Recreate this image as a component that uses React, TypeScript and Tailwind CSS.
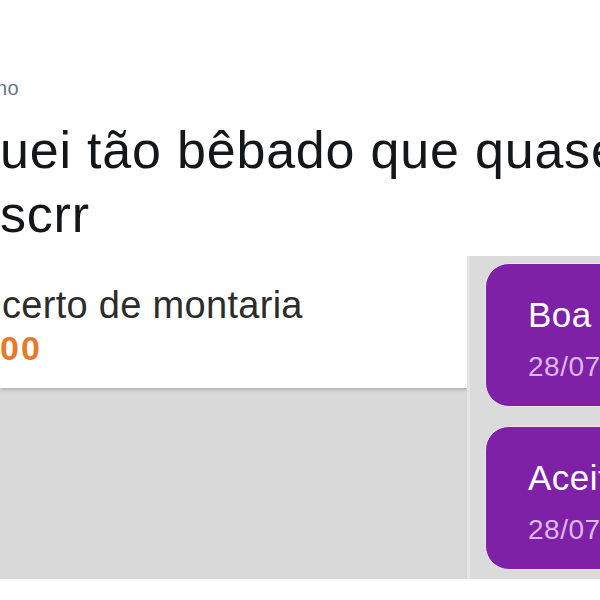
export default function App() {
  const bubbles = [
    { text: 'Boa', date: '28/07' },
    { text: 'Aceito', date: '28/07' },
  ]

  return (
    <div className="w-[600px] h-[600px] bg-white overflow-hidden font-['Liberation_Sans',Arial,sans-serif]">
      {/* Tweet */}
      <div className="h-[256px] pt-[78px] overflow-hidden whitespace-nowrap">
        <p className="-ml-[4px] text-[20px] leading-none tracking-[0.5px] text-[#657786]">no</p>
        <p className="mt-[20px] text-[52px] leading-[64px] tracking-[0.8px] text-[#14171a]">
          uei tão bêbado que quase
          <br />
          scrr
        </p>
      </div>

      {/* Screenshot inside tweet */}
      <div className="flex h-[323px] overflow-hidden">
        <div className="w-[467px] shrink-0 bg-[#d9d9d9]">
          <div className="h-[132px] bg-white pt-[27px] pl-[2px] shadow-[0_2px_3px_rgba(0,0,0,0.18)] whitespace-nowrap">
            <p className="text-[38px] leading-[44px] tracking-[0.3px] text-[#2c2c2c]">certo de montaria</p>
            <p className="mt-[3px] -ml-[2px] text-[34px] leading-[37px] font-bold tracking-[2px] text-[#e8792b]">00</p>
          </div>
        </div>
        <div className="w-[3px] shrink-0 bg-[#e5e5e5]" />
        <div className="flex-1 bg-[#dbdbdb] pl-[15px] pt-[7px] flex flex-col gap-[19px]">
          {bubbles.map((b) => (
            <div
              key={b.text}
              className="w-[160px] h-[144px] shrink-0 rounded-[24px] bg-[#7e21a7] border border-[#eedff4] pt-[31px] pl-[42px] whitespace-nowrap"
            >
              <p className="text-[35px] leading-[40px] tracking-[0.5px] text-white">{b.text}</p>
              <p className="mt-[15px] text-[28px] leading-[33px] tracking-[0.5px] text-[#d9b8ea]">{b.date}</p>
            </div>
          ))}
        </div>
      </div>
    </div>
  )
}
